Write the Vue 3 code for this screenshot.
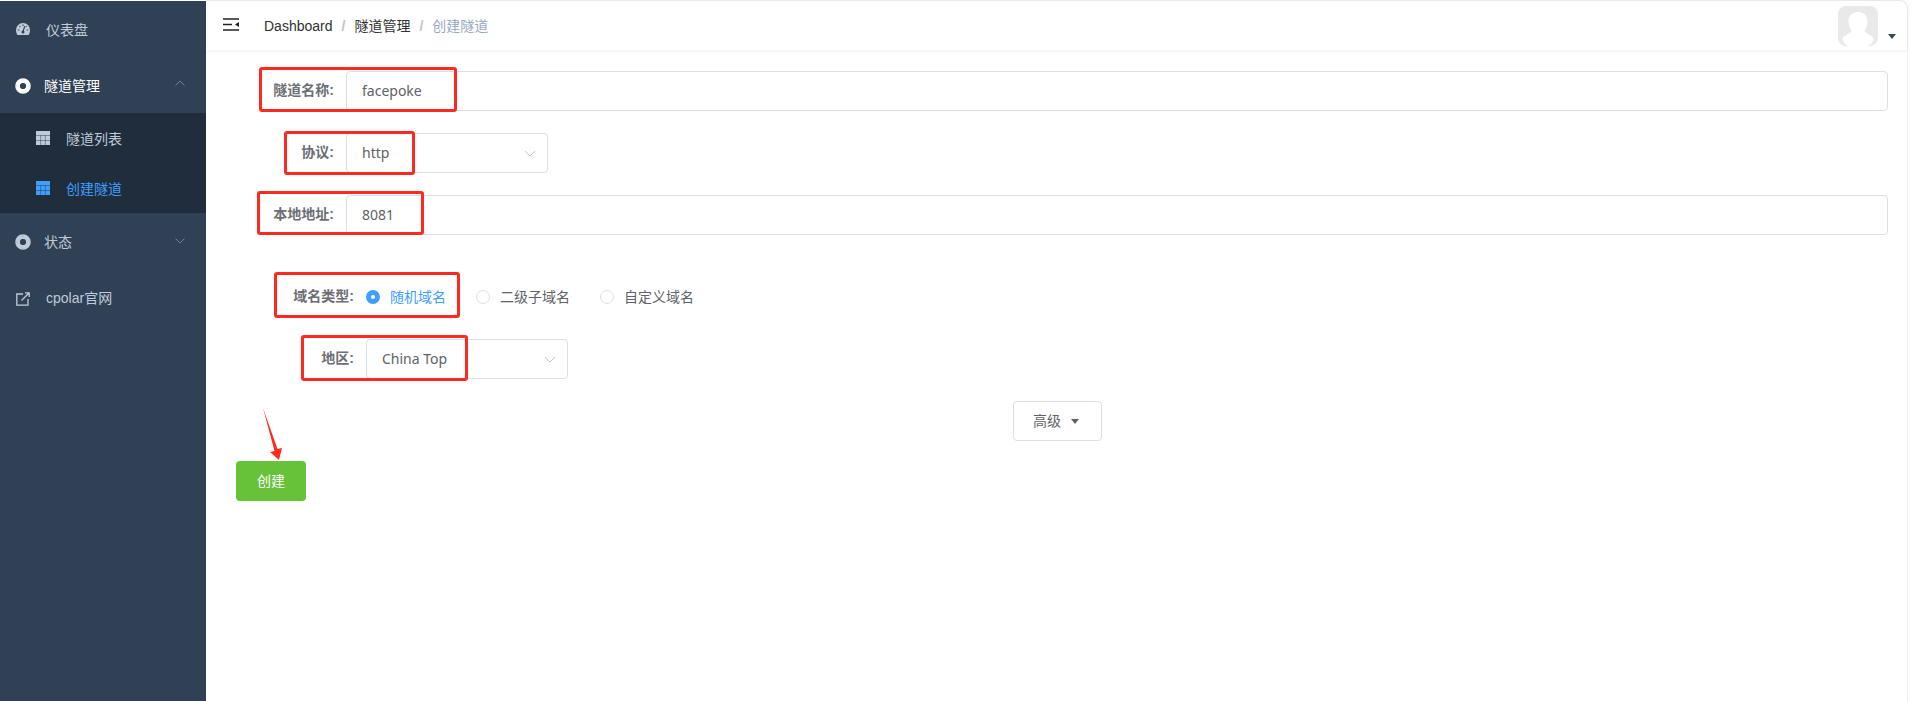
<script setup>
const subItems = [
  { label: '隧道列表', active: false },
  { label: '创建隧道', active: true }
]
const radios = [
  { label: '随机域名', checked: true },
  { label: '二级子域名', checked: false },
  { label: '自定义域名', checked: false }
]
const marks = [
  { id: 1, left: 259, top: 67, width: 198, height: 45 },
  { id: 2, left: 284, top: 131, width: 131, height: 44 },
  { id: 3, left: 257, top: 191, width: 167, height: 44 },
  { id: 4, left: 274, top: 272, width: 186, height: 46 },
  { id: 5, left: 301, top: 335, width: 167, height: 46 }
]
</script>

<template>
  <div class="app">
    <aside class="sidebar">
      <div class="menu-item first">
        <svg class="icon gauge" viewBox="0 0 14 12">
          <path fill="#bfcbd9" d="M7 0a7 7 0 0 0-7 7c0 1.800.5 3.500 1.300 5h11.400c.8-1.500 1.300-3.200 1.300-5a7 7 0 0 0-7-7z"/>
          <path fill="none" stroke="#304156" stroke-width="1.100" d="M7 1.500v1.500M3.400 3l.9 1M10.600 3l-.9 1M1.800 7h1.500M10.700 7h1.500M8.800 3.200 7 8.500"/>
          <circle cx="7" cy="9" r="1.500" fill="#304156"/>
        </svg>
        <span class="menu-text">仪表盘</span>
      </div>
      <div class="menu-item group open">
        <svg class="icon ring" viewBox="0 0 16 16"><circle cx="8" cy="8" r="5.300" fill="none" stroke="#fff" stroke-width="5"/><circle cx="8" cy="8" r="3" fill="#304156"/><path d="M8 .5v2.200M8 13.300v2.200M.5 8h2.200M13.300 8h2.200" stroke="#d8a878" stroke-width=".6" opacity=".7"/></svg>
        <span class="group-text">隧道管理</span>
        <svg class="chev" viewBox="0 0 10 6"><path d="M.5 5.500 5 1l4.500 4.500" fill="none" stroke="#6f7f92" stroke-width="1"/></svg>
      </div>
      <div class="submenu">
        <div v-for="item in subItems" :key="item.label" class="sub-item" :class="{ active: item.active }">
          <svg class="icon grid" viewBox="0 0 14 14">
            <path class="grid-fill" d="M0 0h14v14H0z"/>
            <path class="grid-line" d="M0 4.500h14M0 9.500h14M4.700 4v10M9.300 4v10"/>
          </svg>
          <span class="menu-text">{{ item.label }}</span>
        </div>
      </div>
      <div class="menu-item group status">
        <svg class="icon ring" viewBox="0 0 16 16"><circle cx="8" cy="8" r="5.300" fill="none" stroke="#bfcbd9" stroke-width="5"/><circle cx="8" cy="8" r="3" fill="#304156"/><path d="M8 .5v2.200M8 13.300v2.200M.5 8h2.200M13.300 8h2.200" stroke="#b09a80" stroke-width=".6" opacity=".7"/></svg>
        <span class="group-text">状态</span>
        <svg class="chev" viewBox="0 0 10 6"><path d="M.5.500 5 5 9.500.500" fill="none" stroke="#6f7f92" stroke-width="1"/></svg>
      </div>
      <div class="menu-item link">
        <svg class="icon ext" viewBox="0 0 14 14"><path d="M7 2H.8v11.200H12V7M5.500 8.500 13 1M9 .8h4.200V5" fill="none" stroke="#bfcbd9" stroke-width="1.300"/></svg>
        <span class="menu-text">cpolar官网</span>
      </div>
    </aside>

    <main class="main">
      <header class="navbar">
        <svg class="hamburger" viewBox="0 0 16 13"><path d="M0 1h16M0 6.500h9M0 12h16" stroke="#222" stroke-width="1.400"/><path d="M16 4v5l-4-2.500z" fill="#222"/></svg>
        <nav class="crumbs">
          <span class="crumb-link">Dashboard</span>
          <span class="sep">/</span>
          <span class="crumb-link">隧道管理</span>
          <span class="sep">/</span>
          <span class="crumb-current">创建隧道</span>
        </nav>
        <div class="avatar-wrap">
          <svg class="avatar" viewBox="0 0 40 40">
            <rect width="40" height="40" rx="8" fill="#e9e9e9"/>
            <path d="M20 6c-6 0-9.500 3.500-9.500 9.500 0 4 1.500 7 3 9 0 2-5 4-7.500 6-1 1-1.500 2-1.500 4 2 3 4 5.500 7 5.500h17c3 0 5-2.500 7-5.500 0-2-.5-3-1.500-4-2.500-2-7.500-4-7.500-6 1.500-2 3-5 3-9C29.500 9.500 26 6 20 6z" fill="#fff"/>
          </svg>
          <span class="caret dark"></span>
        </div>
      </header>

      <form class="form" @submit.prevent>
        <div class="row name-row">
          <label class="label">隧道名称:</label>
          <div class="input full">facepoke</div>
        </div>
        <div class="row protocol-row">
          <label class="label">协议:</label>
          <div class="input select">
            <span>http</span>
            <svg class="select-arrow" viewBox="0 0 12 7"><path d="M1 1l5 5 5-5" fill="none" stroke="#c0c4cc" stroke-width="1"/></svg>
          </div>
        </div>
        <div class="row addr-row">
          <label class="label">本地地址:</label>
          <div class="input full">8081</div>
        </div>
        <div class="row domain-row">
          <label class="label">域名类型:</label>
          <div class="radios">
            <div v-for="r in radios" :key="r.label" class="radio" :class="{ checked: r.checked }">
              <span class="dot"></span>
              <span>{{ r.label }}</span>
            </div>
          </div>
        </div>
        <div class="row region-row">
          <label class="label">地区:</label>
          <div class="input select">
            <span>China Top</span>
            <svg class="select-arrow" viewBox="0 0 12 7"><path d="M1 1l5 5 5-5" fill="none" stroke="#c0c4cc" stroke-width="1"/></svg>
          </div>
        </div>
        <div class="advanced-row">
          <button type="button" class="adv-btn">高级<span class="caret"></span></button>
        </div>
        <button type="button" class="create-btn">创建</button>
      </form>
    </main>

    <div v-for="m in marks" :key="m.id" class="mark"
      :style="{ left: m.left + 'px', top: m.top + 'px', width: m.width + 'px', height: m.height + 'px' }"></div>
    <svg class="arrow" viewBox="0 0 24 58"><path d="M1 1 L15.500 42 L20 41 L17 53 L8 45 L12.500 44z" fill="#ff2a1f"/></svg>
  </div>
</template>

<style>
html, body { margin: 0; background: #fff; overflow: hidden; }
</style>

<style scoped>
.app {
  position: relative;
  display: flex;
  width: 1912px;
  height: 701px;
  overflow: hidden;
  background: #fff;
  font-family: "Liberation Sans", "Noto Sans CJK SC", sans-serif;
  font-size: 14px;
  line-height: 20px;
}
.sidebar {
  flex: 0 0 206px;
  background: #304156;
  color: #bfcbd9;
  margin-top: 1px;
}
.icon { flex: none; display: block; }
.menu-item {
  display: flex;
  align-items: center;
  height: 56px;
  padding-left: 16px;
  box-sizing: border-box;
}
.menu-item.first { height: 56px; margin-top: 1px; }
.menu-item.group { padding-left: 15px; position: relative; }
.menu-item.open { height: 55px; }
.gauge { width: 14px; height: 12px; margin-top: -2px; }
.ring { width: 16px; height: 16px; }
.ext { width: 14px; height: 14px; }
.menu-text { margin-left: 16px; }
.group-text { margin-left: 13px; }
.menu-item.open .group-text { color: #fff; }
.chev { position: absolute; right: 21px; top: 22px; width: 10px; height: 6px; }
.menu-item.status { height: 58px; }
.menu-item.status .chev { top: 25px; }
.link .menu-text { margin-top: -2px; }
.submenu { background: #1f2d3d; }
.sub-item {
  display: flex;
  align-items: center;
  height: 50px;
  padding-left: 36px;
}
.sub-item .menu-text { margin-top: 2px; }
.grid { width: 14px; height: 14px; }
.grid-fill { fill: #bfcbd9; }
.grid-line { stroke: #1f2d3d; stroke-width: 0.800; fill: none; opacity: .55; }
.sub-item.active { color: #409eff; }
.sub-item.active .grid-fill { fill: #409eff; }
.main {
  flex: none;
  width: 1702px;
  box-sizing: border-box;
  display: flex;
  flex-direction: column;
  border-top: 1px solid #eee;
  border-right: 1px solid #f0f0f0;
  border-top-right-radius: 8px;
}
.navbar {
  display: flex;
  align-items: center;
  height: 49px;
  flex: none;
  box-sizing: border-box;
  padding-left: 17px;
  border-top-right-radius: 8px;
  box-shadow: 0 1px 4px rgba(0, 21, 41, .08);
}
.hamburger { width: 16px; height: 13px; margin-top: -3px; }
.crumbs { margin-left: 25px; display: flex; align-items: baseline; color: #303133; gap: 9px; }
.sep { color: #c0c4cc; font-weight: 700; }
.crumb-current { color: #97a8be; }
.avatar-wrap { margin-left: auto; display: flex; align-items: flex-start; height: 49px; }
.avatar { width: 40px; height: 40px; margin-top: 5px; }
.caret {
  display: inline-block;
  width: 0; height: 0;
  border-left: 4.500px solid transparent;
  border-right: 4.500px solid transparent;
  border-top: 5px solid #606266;
}
.caret.dark { margin: 33px 11px 0 10px; border-top-color: #3c4858; }
.form { padding: 21px 19px 0 30px; flex: 1; color: #606266; }
.row { display: flex; align-items: center; height: 40px; }
.label {
  width: 110px;
  padding-right: 12px;
  box-sizing: border-box;
  text-align: right;
  font-size: 14px;
  font-weight: 700;
  color: #6b6e73;
  margin-top: -2px;
}
.input {
  box-sizing: border-box;
  height: 40px;
  border: 1px solid #dcdfe6;
  border-radius: 4px;
  padding: 0 15px;
  display: flex;
  align-items: center;
  justify-content: space-between;
  font-family: "Noto Sans", "Noto Sans CJK SC", sans-serif;
  font-size: 14px;
}
.full { flex: 1; }
.select { width: 202px; }
.select-arrow { width: 12px; height: 7px; margin-right: -4px; }
.protocol-row { margin-top: 22px; }
.addr-row { margin-top: 22px; }
.domain-row { margin-top: 42px; padding-left: 20px; }
.radios { display: flex; font-size: 14px; }
.radio { display: flex; align-items: center; gap: 10px; margin-right: 30px; }
.radio.checked { color: #409eff; }
.dot {
  width: 14px; height: 14px;
  box-sizing: border-box;
  border: 1px solid #dcdfe6;
  border-radius: 50%;
  background: #fff;
}
.radio.checked .dot { border: 5px solid #409eff; }
.region-row { margin-top: 22px; padding-left: 20px; }
.advanced-row { margin-top: 22px; padding-right: 9px; display: flex; justify-content: center; }
.adv-btn {
  width: 89px; height: 40px;
  background: #fff;
  border: 1px solid #dcdfe6;
  border-radius: 4px;
  color: #606266;
  font: inherit;
  font-size: 14px;
  padding: 0 3px 0 0;
}
.adv-btn .caret { margin-left: 10px; vertical-align: 2px; }
.create-btn {
  display: block;
  margin-top: 20px;
  width: 70px; height: 40px;
  background: #67c23a;
  border: 0;
  border-radius: 4px;
  color: #fff;
  font: inherit;
  font-size: 14px;
  padding: 0;
}
.mark {
  position: absolute;
  box-sizing: border-box;
  border: 3px solid #ff2a1f;
  border-radius: 3px;
}
.arrow { position: absolute; left: 262px; top: 407px; width: 24px; height: 58px; }
</style>
